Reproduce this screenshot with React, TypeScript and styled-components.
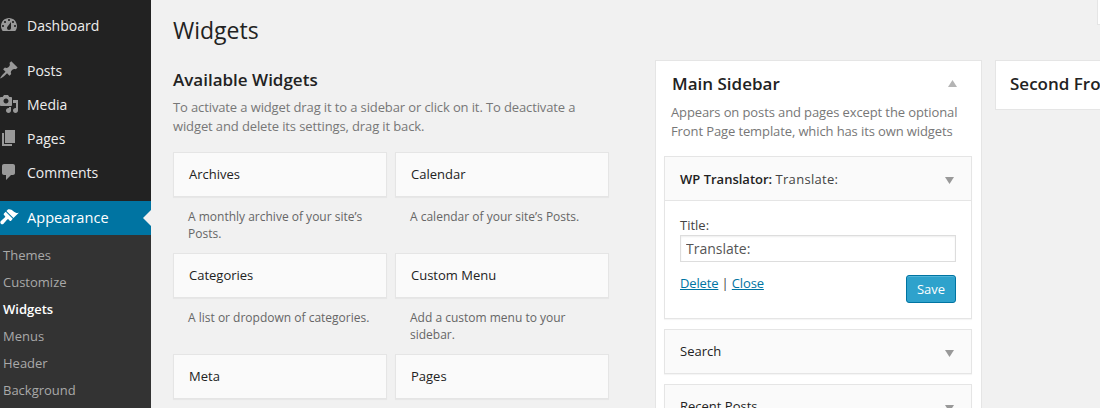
import React from 'react';
import styled, { createGlobalStyle } from 'styled-components';

const Global = createGlobalStyle`
  html, body {
    margin: 0;
    padding: 0;
    width: 1100px;
    height: 408px;
    overflow: hidden;
    background: #f1f1f1;
  }
  * { box-sizing: border-box; }
`;

const icons: Record<string, string> = {
  dashboard:
    'M3.76 16h12.48c1.1-1.37 1.76-3.11 1.76-5 0-4.42-3.58-8-8-8s-8 3.58-8 8c0 1.89.66 3.63 1.76 5zM10 4c.55 0 1 .45 1 1s-.45 1-1 1-1-.45-1-1 .45-1 1-1zM6 6c.55 0 1 .45 1 1s-.45 1-1 1-1-.45-1-1 .45-1 1-1zm8 0c.55 0 1 .45 1 1s-.45 1-1 1-1-.45-1-1 .45-1 1-1zm-5.37 5.55L12 7v6c0 1.1-.9 2-2 2s-2-.9-2-2c0-.57.25-1.08.63-1.45zM4 10c.55 0 1 .45 1 1s-.45 1-1 1-1-.45-1-1 .45-1 1-1zm12 0c.55 0 1 .45 1 1s-.45 1-1 1-1-.45-1-1 .45-1 1-1z',
  posts:
    'M10.44 3.02l1.82-1.82 6.36 6.35-1.83 1.82c-1.05-.68-2.48-.57-3.41.36l-.75.75c-.92.93-1.04 2.35-.35 3.41l-1.83 1.82-2.41-2.41-2.8 2.79c-.42.42-3.38 2.71-3.8 2.29s1.86-3.39 2.28-3.81l2.79-2.79L4.1 9.36l1.83-1.82c1.05.69 2.48.57 3.4-.36l.75-.75c.93-.92 1.05-2.35.36-3.41z',
  media:
    'M13 11V4c0-.55-.45-1-1-1h-1.67L9 1H5L3.67 3H2c-.55 0-1 .45-1 1v7c0 .55.45 1 1 1h10c.55 0 1-.45 1-1zM7 4.5c1.38 0 2.5 1.12 2.5 2.5S8.38 9.5 7 9.5 4.5 8.38 4.5 7 5.62 4.5 7 4.5zM14 6h5v10.5c0 1.38-1.12 2.5-2.5 2.5S14 17.88 14 16.5s1.12-2.5 2.5-2.5c.17 0 .34.02.5.05V9h-3V6zm-4 8.05V13h2v3.5c0 1.38-1.12 2.5-2.5 2.5S7 17.88 7 16.5 8.12 14 9.5 14c.17 0 .34.02.5.05z',
  pages: 'M6 15V2h10v13H6zm-1 1h8v2H3V5h2v11z',
  comments: 'M5 2h9c1.1 0 2 .9 2 2v7c0 1.1-.9 2-2 2h-2l-5 5v-5H5c-1.1 0-2-.9-2-2V4c0-1.1.9-2 2-2z',
  appearance:
    'M14.48 11.06L7.41 3.99l1.5-1.5c.5-.56 2.3-.47 3.51.32 1.21.8 1.43 1.28 2.91 2.1 1.18.64 2.45 1.26 4.45.85zm-.71.71L6.7 4.7 4.93 6.47c-.39.39-.39 1.02 0 1.41l1.06 1.06c.39.39.39 1.03 0 1.42-.6.6-1.43 1.27-2.21 1.94-.63.55-1.6 1.4-1.92 1.72-.75.75-.75 1.96 0 2.71.75.75 1.96.75 2.71 0 .32-.32 1.17-1.29 1.72-1.92.67-.78 1.34-1.61 1.94-2.21.39-.39 1.03-.39 1.42 0l1.06 1.06c.39.39 1.02.39 1.41 0z',
};

const MenuIcon = ({ name, active }: { name: string; active?: boolean }) => (
  <IconSvg viewBox="0 0 20 20" $active={active}>
    <path fillRule="evenodd" d={icons[name]} />
  </IconSvg>
);

const Caret = ({ up }: { up?: boolean }) => (
  <CaretSvg viewBox="0 0 9 7" $up={up}>
    <path d={up ? 'M4.5 0 9 7H0z' : 'M0 0h9L4.5 7z'} />
  </CaretSvg>
);

const available = [
  ['Archives', 'A monthly archive of your site’s Posts.', 'Calendar', 'A calendar of your site’s Posts.'],
  ['Categories', 'A list or dropdown of categories.', 'Custom Menu', 'Add a custom menu to your sidebar.'],
  ['Meta', '', 'Pages', ''],
];

export default function App() {
  return (
    <Page>
      <Global />
      <Sidebar>
        <MenuItem>
          <MenuIcon name="dashboard" />
          Dashboard
        </MenuItem>
        <MainMenu>
          <MenuItem><MenuIcon name="posts" />Posts</MenuItem>
          <MenuItem><MenuIcon name="media" />Media</MenuItem>
          <MenuItem><MenuIcon name="pages" />Pages</MenuItem>
          <MenuItem><MenuIcon name="comments" />Comments</MenuItem>
        </MainMenu>
        <ActiveItem>
          <MenuIcon name="appearance" active />
          Appearance
          <ActiveArrow />
        </ActiveItem>
        <SubMenu>
          <SubItem>Themes</SubItem>
          <SubItem>Customize</SubItem>
          <SubItem $current>Widgets</SubItem>
          <SubItem>Menus</SubItem>
          <SubItem>Header</SubItem>
          <SubItem>Background</SubItem>
        </SubMenu>
      </Sidebar>

      <Content>
        <PageTitle>Widgets</PageTitle>
        <Columns>
          <LeftColumn>
            <SectionTitle>Available Widgets</SectionTitle>
            <Description>
              To activate a widget drag it to a sidebar or click on it. To deactivate a
              <br />
              widget and delete its settings, drag it back.
            </Description>
            <WidgetGrid>
              {available.flatMap(([a, ad, b, bd]) => [
                <WidgetCell key={a}>
                  <WidgetCard>{a}</WidgetCard>
                  <WidgetDesc>{ad}</WidgetDesc>
                </WidgetCell>,
                <WidgetCell key={b}>
                  <WidgetCard>{b}</WidgetCard>
                  <WidgetDesc>{bd}</WidgetDesc>
                </WidgetCell>,
              ])}
            </WidgetGrid>
          </LeftColumn>

          <MainSidebar>
            <SidebarHead>
              Main Sidebar
              <Caret up />
            </SidebarHead>
            <SidebarDesc>
              Appears on posts and pages except the optional
              <br />
              Front Page template, which has its own widgets
            </SidebarDesc>
            <OpenWidget>
              <WidgetHead>
                <span><b>WP Translator:</b> <em>Translate:</em></span>
                <Caret />
              </WidgetHead>
              <WidgetBody>
                <FieldLabel>Title:</FieldLabel>
                <TitleInput readOnly value="Translate:" />
                <Actions>
                  <ActionLinks><a>Delete</a> | <a>Close</a></ActionLinks>
                  <SaveButton>Save</SaveButton>
                </Actions>
              </WidgetBody>
            </OpenWidget>
            <ClosedWidget>
              Search
              <Caret />
            </ClosedWidget>
            <ClosedWidget>
              Recent Posts
              <Caret />
            </ClosedWidget>
          </MainSidebar>

          <SecondSidebar>Second Front Page Widget Area</SecondSidebar>
        </Columns>
      </Content>
      <CornerBox />
    </Page>
  );
}

const Page = styled.div`
  position: relative;
  display: flex;
  width: 1100px;
  height: 408px;
  overflow: hidden;
  background: #f1f1f1;
  font-family: "Open Sans", sans-serif;
  font-size: 13px;
  color: #444;
`;

// Admin menu ---------------------------------------------------------
const Sidebar = styled.nav`
  flex: 0 0 151px;
  background: #222;
  padding-top: 8px;
  overflow: hidden;
`;

const MenuItem = styled.div`
  display: flex;
  align-items: center;
  height: 34px;
  font-size: 14px;
  color: #eee;
`;

const MainMenu = styled.div`
  margin-top: 11px;
`;

const IconSvg = styled.svg<{ $active?: boolean }>`
  flex: none;
  width: 20px;
  height: 20px;
  margin: 0 8px 0 -1px;
  fill: ${(p) => (p.$active ? '#fff' : '#999')};
`;

const ActiveItem = styled(MenuItem)`
  position: relative;
  margin-top: 12px;
  padding-bottom: 2px;
  background: #0074a2;
  color: #fff;
  font-size: 14.6px;
`;

const ActiveArrow = styled.span`
  position: absolute;
  right: 0;
  top: 9px;
  border: 8px solid transparent;
  border-right-color: #f1f1f1;
  border-left-width: 0;
`;

const SubMenu = styled.div`
  background: #333;
  padding-top: 7px;
  height: 200px;
`;

const SubItem = styled.div<{ $current?: boolean }>`
  height: 27px;
  line-height: 27px;
  padding-left: 3px;
  font-size: 13px;
  color: ${(p) => (p.$current ? '#fff' : '#a9a9a9')};
  font-weight: ${(p) => (p.$current ? 600 : 400)};
`;

// Content ---------------------------------------------------------
const Content = styled.main`
  flex: 1;
  min-width: 0;
  padding: 13px 0 0 22px;
`;

const PageTitle = styled.h1`
  margin: 0;
  font-size: 23px;
  font-weight: 400;
  line-height: 35px;
  color: #222;
`;

const Columns = styled.div`
  display: flex;
  align-items: flex-start;
  margin-top: 12px;
  width: 1000px;
`;

const LeftColumn = styled.section`
  flex: 0 0 436px;
  margin-right: 46px;
`;

const SectionTitle = styled.h2`
  margin: 8px 0 0;
  font-size: 17px;
  font-weight: 600;
  line-height: 24px;
  color: #222;
`;

const Description = styled.p`
  margin: 6px 0 0;
  line-height: 19px;
  letter-spacing: -0.12px;
  color: #777;
`;

const WidgetGrid = styled.div`
  display: grid;
  grid-template-columns: 214px 214px;
  column-gap: 8px;
  margin-top: 16px;
`;

const WidgetCell = styled.div`
  height: 101px;
`;

const WidgetCard = styled.div`
  height: 45px;
  line-height: 43px;
  padding-left: 15px;
  background: #fafafa;
  border: 1px solid #e5e5e5;
  box-shadow: 0 1px 1px rgba(0, 0, 0, 0.04);
  font-weight: 500;
  color: #222;
`;

const WidgetDesc = styled.p`
  margin: 11px 0 0;
  padding: 0 15px;
  font-size: 12px;
  line-height: 17px;
  color: #666;
`;

const MainSidebar = styled.section`
  flex: 0 0 327px;
  height: 420px;
  background: #fff;
  border: 1px solid #e5e5e5;
  padding: 0 9px 0 8px;
`;

const SidebarHead = styled.h3`
  display: flex;
  justify-content: space-between;
  align-items: center;
  margin: 0;
  padding: 10px 15px 0 8px;
  font-size: 17px;
  font-weight: 600;
  line-height: 25px;
  color: #222;
`;

const CaretSvg = styled.svg<{ $up?: boolean }>`
  width: 9px;
  height: 7px;
  fill: ${(p) => (p.$up ? '#b4b4b4' : '#999')};
`;

const SidebarDesc = styled.p`
  margin: 7px 0 0;
  padding-left: 7px;
  line-height: 19px;
  letter-spacing: -0.11px;
  color: #777;
`;

const OpenWidget = styled.div`
  margin-top: 15px;
  background: #fff;
  border: 1px solid #e5e5e5;
  box-shadow: 0 1px 1px rgba(0, 0, 0, 0.04);
`;

const WidgetHead = styled.div`
  display: flex;
  justify-content: space-between;
  align-items: center;
  height: 44px;
  padding: 0 17px 0 15px;
  background: #fafafa;
  border-bottom: 1px solid #e5e5e5;
  color: #444;
  font-weight: 500;
  b {
    color: #222;
    font-weight: 600;
  }
  em {
    font-style: normal;
    letter-spacing: 0.3px;
  }
  svg {
    transform: translateY(2px);
  }
`;

const WidgetBody = styled.div`
  padding: 15px 15px 15px;
`;

const FieldLabel = styled.label`
  display: block;
  line-height: 19px;
`;

const TitleInput = styled.input`
  display: block;
  width: 276px;
  height: 27px;
  padding: 0 5px;
  border: 1px solid #ddd;
  box-shadow: inset 0 1px 2px rgba(0, 0, 0, 0.07);
  font-family: "Open Sans", sans-serif;
  font-size: 14px;
  color: #555;
  outline: none;
`;

const Actions = styled.div`
  display: flex;
  justify-content: space-between;
  margin-top: 13px;
  height: 28px;
`;

const ActionLinks = styled.div`
  line-height: 16px;
  letter-spacing: -0.15px;
  a {
    color: #0074a2;
    text-decoration: underline;
  }
`;

const SaveButton = styled.button`
  width: 50px;
  height: 28px;
  padding: 0;
  background: #2ea2cc;
  border: 1px solid #0074a2;
  border-radius: 3px;
  box-shadow: inset 0 1px 0 rgba(120, 200, 230, 0.5);
  font-family: "Open Sans", sans-serif;
  font-size: 13px;
  color: #fff;
`;

const ClosedWidget = styled.div`
  display: flex;
  justify-content: space-between;
  align-items: center;
  height: 45px;
  margin-top: 10px;
  padding: 0 17px 2px 15px;
  background: #fafafa;
  border: 1px solid #e5e5e5;
  box-shadow: 0 1px 1px rgba(0, 0, 0, 0.04);
  font-weight: 500;
  color: #222;
  svg {
    transform: translateY(3px);
  }
`;

const SecondSidebar = styled.section`
  flex: 0 0 328px;
  height: 50px;
  margin-left: 13px;
  padding: 10px 14px 0;
  background: #fff;
  border: 1px solid #e5e5e5;
  font-size: 17px;
  font-weight: 600;
  line-height: 25px;
  white-space: nowrap;
  color: #222;
`;

const CornerBox = styled.div`
  position: absolute;
  top: 0;
  right: 0;
  width: 3px;
  height: 25px;
  background: #fff;
  border: 1px solid #e5e5e5;
  border-right: 0;
  border-top: 0;
`;
